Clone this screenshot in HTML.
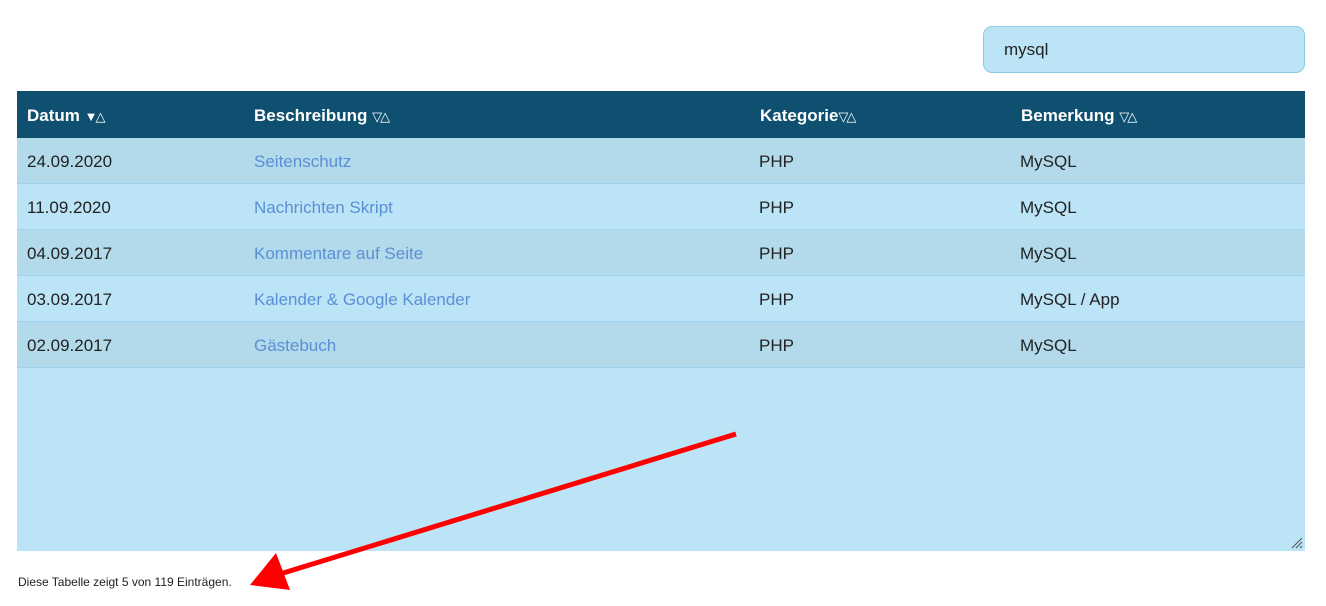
<!DOCTYPE html>
<html><head><style>
body{margin:0;width:1326px;height:606px;background:#fff;font-family:"Liberation Sans",sans-serif;position:relative;overflow:hidden}
.search{position:absolute;left:983px;top:26px;width:322px;height:47px;box-sizing:border-box;background:#bce4f7;border:1px solid #8ccbe6;border-radius:9px;font-size:17px;color:#222;padding:13px 0 0 20px}
.box{position:absolute;left:17px;top:91px;width:1288px;height:460px;background:#bce4f7}
.hd{position:absolute;left:0;top:0;width:1288px;height:47px;background:#0f5070;color:#fff;font-weight:bold;font-size:17px}
.row{position:absolute;left:0;width:1288px;height:45px;border-bottom:1px solid #9fd2ec;font-size:17px;color:#222}
.c{position:absolute;top:14px;white-space:nowrap}
.hd .c{top:15px}
.s{font-size:13px;font-weight:normal;letter-spacing:-2px}
.a{color:#5b8fd6}
.foot{position:absolute;left:18px;top:575px;font-size:12px;color:#222}
</style></head><body>
<div class="search">mysql</div>
<div class="box">
<div class="hd"><span class="c" style="left:10px">Datum <span class="s">▼△</span></span><span class="c" style="left:237px">Beschreibung <span class="s">▽△</span></span><span class="c" style="left:743px">Kategorie<span class="s">▽△</span></span><span class="c" style="left:1004px">Bemerkung <span class="s">▽△</span></span></div>
<div class="row" style="top:47px;background:#b3daea"><span class="c" style="left:10px">24.09.2020</span><span class="c a" style="left:237px">Seitenschutz</span><span class="c" style="left:742px">PHP</span><span class="c" style="left:1003px">MySQL</span></div>
<div class="row" style="top:93px"><span class="c" style="left:10px">11.09.2020</span><span class="c a" style="left:237px">Nachrichten Skript</span><span class="c" style="left:742px">PHP</span><span class="c" style="left:1003px">MySQL</span></div>
<div class="row" style="top:139px;background:#b3daea"><span class="c" style="left:10px">04.09.2017</span><span class="c a" style="left:237px">Kommentare auf Seite</span><span class="c" style="left:742px">PHP</span><span class="c" style="left:1003px">MySQL</span></div>
<div class="row" style="top:185px"><span class="c" style="left:10px">03.09.2017</span><span class="c a" style="left:237px">Kalender &amp; Google Kalender</span><span class="c" style="left:742px">PHP</span><span class="c" style="left:1003px">MySQL / App</span></div>
<div class="row" style="top:231px;background:#b3daea"><span class="c" style="left:10px">02.09.2017</span><span class="c a" style="left:237px">Gästebuch</span><span class="c" style="left:742px">PHP</span><span class="c" style="left:1003px">MySQL</span></div>
<svg style="position:absolute;right:2px;bottom:2px" width="12" height="12"><path d="M11 1L1 11M11 5L5 11M11 9L9 11" stroke="#555" stroke-width="1"/></svg>
</div>
<svg style="position:absolute;left:0;top:0" width="1326" height="606"><line x1="736" y1="434" x2="280" y2="574" stroke="#f00" stroke-width="5"/><polygon points="250,585 276,553 290,590" fill="#f00"/></svg>
<div class="foot">Diese Tabelle zeigt 5 von 119 Einträgen.</div>
</body></html>
